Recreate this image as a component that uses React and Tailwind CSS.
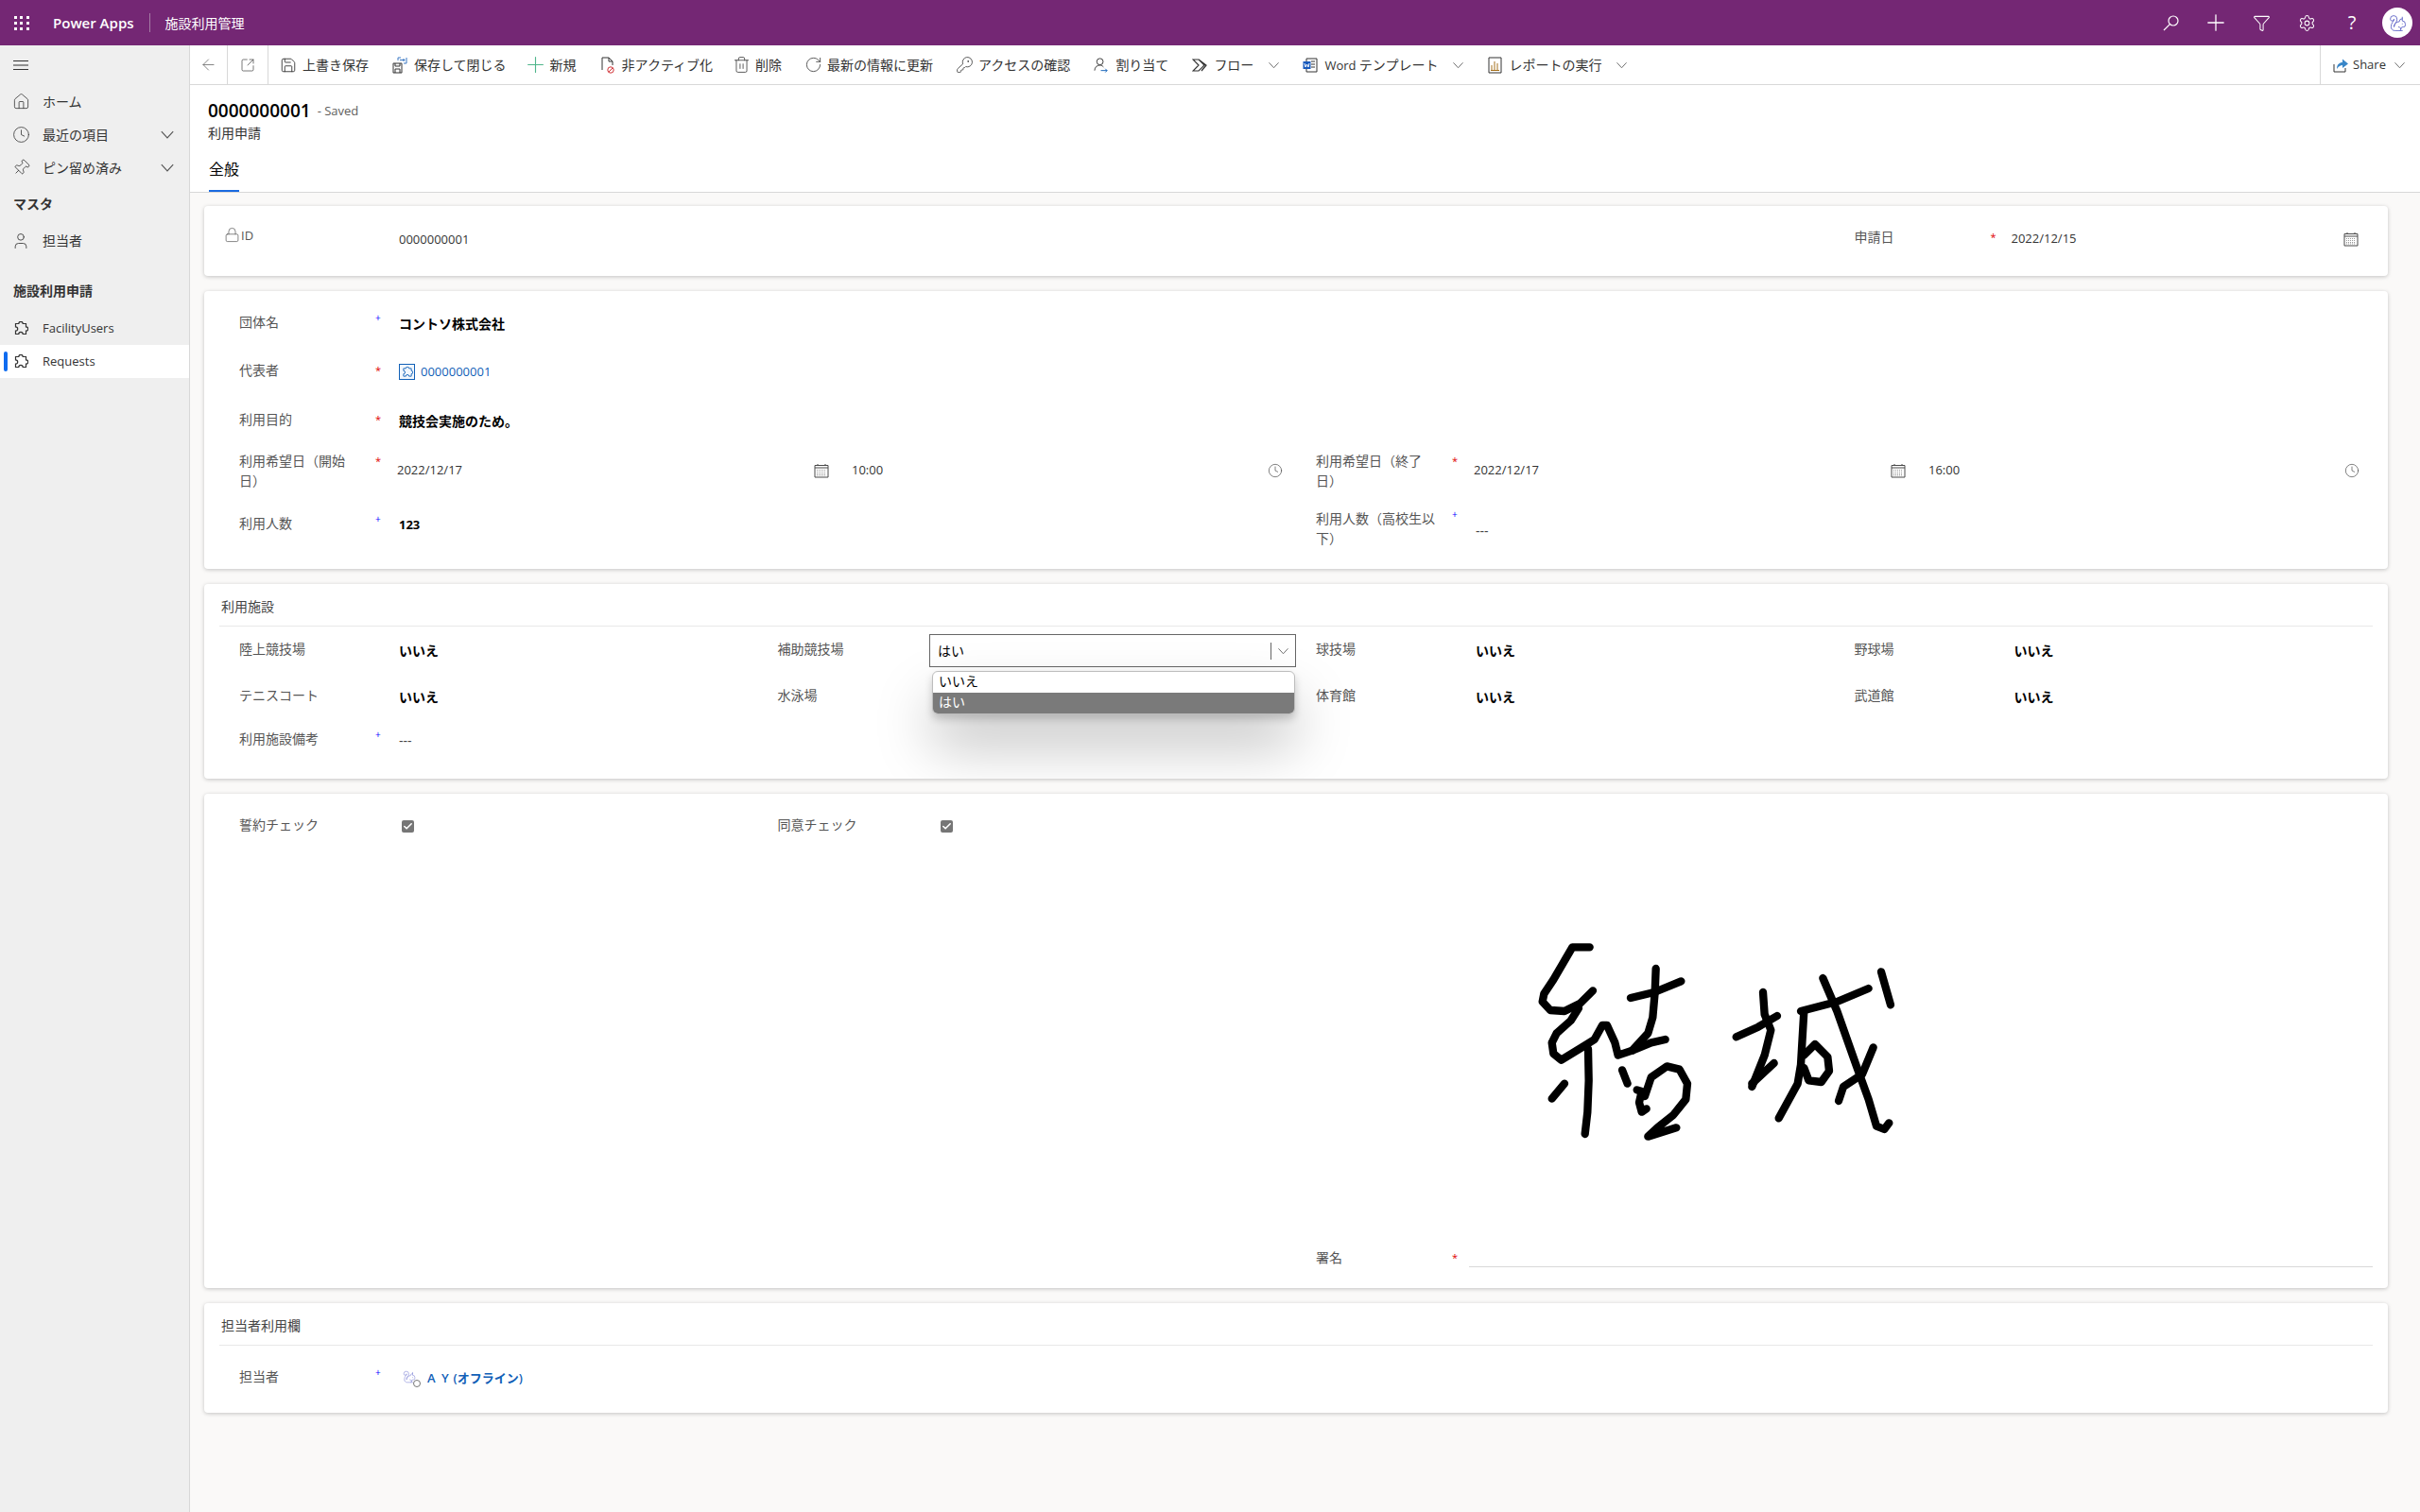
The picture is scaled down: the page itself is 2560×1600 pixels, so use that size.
import React from "react";
import {
  ArrowLeft, Check, Clock, Filter, Home, KeyRound, Lock,
  Pin, Plus, RotateCw, Save, Settings, Squirrel, SquareArrowOutUpRight, Trash2, User,
} from "lucide-react";

const Chevron = ({ className = "" }) => (
  <svg width="12" height="8" viewBox="0 0 12 8" className={className} fill="none" stroke="currentColor" strokeWidth="1">
    <path d="M0.5 1 L6 7 L11.5 1" />
  </svg>
);

const PuzzleIcon = ({ size = 16, color = "#333" }) => (
  <svg width={size} height={size} viewBox="0 0 16 16" fill="none" stroke={color} strokeWidth="1.2">
    <path d="M2.5 2.5 H5.8 A2.2 2.2 0 0 1 10.2 2.5 H13.5 V5.8 A2.2 2.2 0 0 1 13.5 10.2 V13.5 H10.2 A2.2 2.2 0 0 0 5.8 13.5 H2.5 V10.2 A2.2 2.2 0 0 0 2.5 5.8 Z" />
  </svg>
);

const SearchIcon = () => (
  <svg width="17" height="17" viewBox="0 0 17 17" fill="none" stroke="#fff" strokeWidth="1.2">
    <circle cx="11" cy="6" r="5" />
    <path d="M7.4 9.6 L1 16" />
  </svg>
);

const SaveCloseIcon = () => (
  <svg width="16" height="18" viewBox="0 0 16 18" fill="none" stroke="#333" strokeWidth="1">
    <path d="M1 7 H10 V17 H1 Z M3 7 V10 H8 V7 M3 17 V13 H8 V17" />
    <path d="M6 4 V1 H9 M15 1 V7 H12 M8 3.5 H13 M11.5 2 L13 3.5 L11.5 5" stroke="#3b79c4" />
  </svg>
);

const DeactivateIcon = () => (
  <svg width="16" height="18" viewBox="0 0 16 18" fill="none" stroke="#333" strokeWidth="1">
    <path d="M2 14 V1 H9 L13 5 V9 M9 1 V5 H13" />
    <circle cx="11" cy="14" r="3.2" stroke="#d13438" />
    <path d="M9 16 L13 12" stroke="#d13438" />
  </svg>
);

const AssignIcon = () => (
  <svg width="17" height="18" viewBox="0 0 17 18" fill="none" stroke="#333" strokeWidth="1">
    <circle cx="7" cy="5" r="3.6" />
    <path d="M1 15 C1 11 4 9 7 9 C9 9 10 10 11 11" />
    <path d="M8 15 H15 M13 13 L15 15 L13 17" stroke="#1160b7" />
  </svg>
);

const FlowIcon = () => (
  <svg width="16" height="14" viewBox="0 0 16 14" fill="none" stroke="#333" strokeWidth="1.2">
    <path d="M1 1 H7 L13 7 L7 13 H1 L7 7 Z M7 1 L15 7 L10 13" />
  </svg>
);

const WordIcon = () => (
  <svg width="16" height="16" viewBox="0 0 16 16" fill="none" stroke="#333" strokeWidth="1">
    <path d="M4 1 H15 V15 H4 Z M9 4 H13 M9 7 H13 M9 10 H13" />
    <rect x="0.5" y="4" width="8" height="8" fill="#185abd" stroke="none" />
    <path d="M2 6 L3 10 L4.5 7 L6 10 L7 6" stroke="#fff" />
  </svg>
);

const ReportIcon = () => (
  <svg width="15" height="18" viewBox="0 0 15 18" fill="none" stroke="#333" strokeWidth="1">
    <path d="M1 1 H14 V17 H1 Z" />
    <path d="M4 14 V9 M7 14 V5 M10 14 V7 M3 14.5 H12" stroke="#a5701c" />
  </svg>
);

const ShareIcon = () => (
  <svg width="16" height="16" viewBox="0 0 16 16" fill="none">
    <path d="M1 7 V15 H13 V11" stroke="#333" strokeWidth="1" />
    <path d="M4 12 C4 7 7 5 10 5 V1.5 L16 6.5 L10 11 V8 C8 8 6 9 4 12 Z" fill="#3a87c8" />
  </svg>
);

const CalendarIcon = () => (
  <svg width="16" height="16" viewBox="0 0 16 16" fill="none" stroke="#4a4a4a" strokeWidth="1">
    <path d="M1 2.5 H15 V15 H1 Z" />
    <path d="M1 5 H15 M4 1 V3 M12 1 V3" />
    <path d="M3 7.5 H13 M3 9.5 H13 M3 11.5 H13 M3 13 H13" stroke="#9a9a9a" strokeDasharray="1 1" />
  </svg>
);

const MenuIcon = () => (
  <svg width="16" height="10" viewBox="0 0 16 10" stroke="#333" strokeWidth="1">
    <path d="M0 0.5 H16 M0 5 H16 M0 9.5 H16" />
  </svg>
);

// signature strokes traced at 3x of the 460x260 area
const strokes = [
  "M305,97 L250,97 L225,140 L190,200 L160,245 L155,270 L180,297 L225,300 L275,275 L315,235",
  "M270,290 L245,330 L200,370 L185,400 L190,435 L215,455 L280,415 L320,390 L345,345 L360,345 L385,400 L395,440 L440,425 L500,400 L545,390",
  "M300,420 L302,520 L298,620 L290,690",
  "M225,530 L185,578",
  "M515,165 L512,240 L505,320 L490,370 L440,425",
  "M435,258 L510,240 L595,205",
  "M408,487 L425,530",
  "M455,550 L470,555 L462,590 L470,620 L485,610",
  "M480,570 L500,510 L550,475 L590,485 L615,530 L610,580 L570,630 L520,670 L490,698 L580,670",
  "M855,240 L860,310 L880,360 L860,440 L820,540",
  "M770,382 L840,350 L900,315",
  "M820,530 L890,465",
  "M975,300 L1090,270 L1190,228",
  "M985,300 L975,470 L965,530 L905,640",
  "M1045,195 L1090,300 L1150,470 L1190,580 L1215,665 L1240,675 L1255,655",
  "M985,440 L1020,405 L1060,445 L1065,490 L1040,525 L1000,520 L985,480",
  "M1205,415 L1170,500 L1110,540 L1095,585",
  "M1230,175 L1260,280",
];

const Signature = () => (
  <svg width="460" height="260" viewBox="0 0 1380 780" fill="none" stroke="#000" strokeWidth="25" strokeLinecap="round" strokeLinejoin="round">
    {strokes.map((d) => <path key={d} d={d} />)}
  </svg>
);

const tools = [
  { icon: <Save size={18} strokeWidth={1.2} className="shrink-0" />, text: "上書き保存" },
  { icon: <SaveCloseIcon />, text: "保存して閉じる" },
  { icon: <Plus size={27} strokeWidth={1} color="#4fb58b" className="shrink-0" />, text: "新規", cls: "-ml-[2px]" },
  { icon: <DeactivateIcon />, text: "非アクティブ化" },
  { icon: <Trash2 size={19} strokeWidth={1} className="shrink-0" />, text: "削除", cls: "-ml-[3px]" },
  { icon: <RotateCw size={19} strokeWidth={1} className="shrink-0" />, text: "最新の情報に更新" },
  { icon: <KeyRound size={19} strokeWidth={1} className="shrink-0" />, text: "アクセスの確認" },
  { icon: <AssignIcon />, text: "割り当て" },
  { icon: <FlowIcon />, text: "フロー", more: true },
  { icon: <WordIcon />, text: <><span className="text-[13px]">Word </span>テンプレート</>, more: true },
  { icon: <ReportIcon />, text: "レポートの実行", more: true },
];

const Star = ({ type }) => {
  if (type === "red") return <span className="-ml-[3px] mt-[4px] block text-[11px] leading-[14px] text-[#e00000]">*</span>;
  if (type === "blue") return <span className="-ml-[3px] block text-[10px] leading-[12px] text-[#0000ff]">+</span>;
  return null;
};

const Field = ({ label, star, children, className = "" }) => (
  <div className={`flex ${className}`}>
    <div className="ml-[21px] w-[147px] shrink-0 pr-[20px] text-[14px] leading-[21px] text-[#555]">{label}</div>
    <div className="w-[22px] shrink-0"><Star type={star} /></div>
    <div className="mt-[2px] flex min-w-0 flex-1 items-start text-[14px] leading-[21px]">{children}</div>
  </div>
);

const Yes = ({ children = "いいえ" }) => <span className="font-bold text-black">{children}</span>;

const Num = ({ children }) => <span className="text-[13px] text-[#333]">{children}</span>;

const DateTime = ({ date, time }) => (
  <div className="-ml-[2px] mt-[8px] flex items-center">
    <div className="flex w-[457px] items-center justify-between"><Num>{date}</Num><CalendarIcon /></div>
    <div className="ml-[24px] flex w-[456px] items-center justify-between">
      <Num>{time}</Num><Clock size={16} strokeWidth={1} color="#444" />
    </div>
  </div>
);

const CheckBox = () => (
  <span className="ml-[3px] mt-[4px] flex h-[13px] w-[13px] items-center justify-center rounded-[2px] bg-[#767676]">
    <Check size={11} strokeWidth={3.5} color="#fff" />
  </span>
);

const Card = ({ className = "", children }) => (
  <section className={`rounded bg-white px-4 shadow-[0_1px_4px_rgba(0,0,0,0.22)] ${className}`}>{children}</section>
);

const SectionTitle = ({ children }) => (
  <div className="mb-[10px] pl-[2px] text-[14px] leading-[21px] text-[#444]">{children}</div>
);

const NavItem = ({ icon, label, more, active }) => (
  <div className={`relative flex h-[35px] items-center text-[#333] ${active ? "bg-white" : ""}`}>
    {active && <span className="absolute left-[4px] top-[7px] h-[21px] w-[4px] rounded-sm bg-[#0f6cf0]" />}
    <span className="flex w-[45px] shrink-0 justify-center pr-[1px]">{icon}</span>
    <span className="-mt-[1px] flex-1">{label}</span>
    {more && <Chevron className="mr-[15px] h-[9px] w-[16px] text-[#555]" />}
  </div>
);

export default function App() {
  return (
    <div className="flex h-[1600px] w-full flex-col overflow-hidden bg-[#faf9f8] font-['Open_Sans','Noto_Sans_CJK_JP',sans-serif] text-[14px] text-[#333]">
      {/* Top bar */}
      <header className="flex h-12 shrink-0 items-center bg-[#742774] text-white">
        <div className="ml-[15px] grid w-[16px] grid-cols-3 gap-[3px]">
          {Array.from({ length: 9 }).map((_, i) => <span key={i} className="h-[3px] w-[3px] bg-white" />)}
        </div>
        <span className="ml-[25px] text-[15px] font-semibold">Power Apps</span>
        <span className="ml-[16px] h-5 w-px bg-[#a57ba5]" />
        <span className="ml-[16px]">施設利用管理</span>
        <div className="ml-auto flex items-center">
          <span className="flex w-12 justify-center"><SearchIcon /></span>
          <span className="flex w-12 justify-center"><Plus size={28} strokeWidth={1.1} /></span>
          <span className="flex w-12 justify-center"><Filter size={19} strokeWidth={1.3} /></span>
          <span className="flex w-12 justify-center"><Settings size={19} strokeWidth={1.3} /></span>
          <span className="flex w-12 justify-center"><span className="text-[20px] leading-none">?</span></span>
          <span className="flex w-12 justify-center">
            <span className="flex h-8 w-8 items-center justify-center rounded-full bg-white">
              <Squirrel size={19} strokeWidth={1.1} color="#5a5fc4" />
            </span>
          </span>
        </div>
      </header>

      <div className="flex min-h-0 flex-1">
        {/* Sidebar */}
        <aside className="w-[201px] shrink-0 border-r border-[#d8d8d8] bg-[#efefef]">
          <div className="flex h-[42px] items-center pl-[14px]"><MenuIcon /></div>
          <NavItem icon={<Home size={19} strokeWidth={1} />} label="ホーム" />
          <NavItem icon={<Clock size={19} strokeWidth={1} />} label="最近の項目" more />
          <NavItem icon={<Pin size={19} strokeWidth={1} className="rotate-45" />} label="ピン留め済み" more />
          <div className="h-[42px] pl-[14px] pt-[10px] font-bold leading-[21px]">マスタ</div>
          <NavItem icon={<User size={20} strokeWidth={1} />} label="担当者" />
          <div className="h-[58px] pl-[14px] pt-[25px] font-bold leading-[21px]">施設利用申請</div>
          <NavItem icon={<PuzzleIcon />} label={<span className="text-[13px]">FacilityUsers</span>} />
          <NavItem icon={<PuzzleIcon />} label={<span className="text-[13px]">Requests</span>} active />
        </aside>

        <main className="flex min-w-0 flex-1 flex-col">
          {/* Command bar */}
          <div className="flex h-[42px] shrink-0 items-center border-b border-[#d8d8d8] bg-white">
            <span className="flex h-full w-[40px] items-center justify-center border-r border-[#d8d8d8]"><ArrowLeft size={19} strokeWidth={1} color="#666" /></span>
            <span className="flex h-full w-[43px] items-center justify-center border-r border-[#d8d8d8]"><SquareArrowOutUpRight size={16} strokeWidth={1} /></span>
            <div className="ml-[13px] flex items-center gap-[25px]">
              {tools.map((t, i) => (
                <div key={i} className={`flex items-center whitespace-nowrap ${t.cls || ""}`}>
                  <span className="mr-[7px] flex w-[16px] justify-center">{t.icon}</span>
                  <span>{t.text}</span>
                  {t.more && <Chevron className="ml-[16px] w-[11px] text-[#666]" />}
                </div>
              ))}
            </div>
            <div className="ml-auto flex h-full w-[106px] items-center border-l border-[#d8d8d8] pl-[13px]">
              <ShareIcon />
              <span className="ml-[5px] text-[13px]">Share</span>
              <Chevron className="ml-[9px] w-[11px] text-[#666]" />
            </div>
          </div>

          {/* Record header */}
          <div className="h-[114px] shrink-0 border-b border-[#d8d8d8] bg-white pl-[19px] pt-[15px]">
            <div className="flex h-[24px] items-center">
              <span className="text-[19px] font-semibold text-black">0000000001</span>
              <span className="ml-[7px] mt-[2px] text-[13px] text-[#605e5c]">- Saved</span>
            </div>
            <div className="mt-[1px] leading-[21px]">利用申請</div>
            <div className="ml-[1px] mt-[16px] w-[32px] border-b-2 border-[#1a6ae0] pb-[10px] text-[16px] leading-[24px] text-black">全般</div>
          </div>

          {/* Form */}
          <div className="flex flex-col gap-4 pl-[15px] pr-[34px] pt-[14px]">
            <Card className="h-[74px] pt-[22px]">
              <div className="grid grid-cols-4">
                <div className="flex">
                  <div className="-mt-[1px] ml-[5px] flex h-[21px] w-[185px] items-center text-[13px] leading-[21px] text-[#555]">
                    <Lock size={17} strokeWidth={1} className="mb-[3px] mr-[1px]" />ID
                  </div>
                  <div className="mt-[2px] leading-[21px]"><Num>0000000001</Num></div>
                </div>
                <div />
                <div />
                <Field label="申請日" star="red">
                  <div className="-ml-[3px] flex flex-1 items-center justify-between pr-[15px]"><Num>2022/12/15</Num><CalendarIcon /></div>
                </Field>
              </div>
            </Card>

            <Card className="h-[294px] pt-[22px]">
              <Field label="団体名" star="blue" className="h-[51px]"><Yes>コントソ株式会社</Yes></Field>
              <Field label="代表者" star="red" className="h-[52px]">
                <span className="flex items-center text-[#1160b7]">
                  <span className="mr-[6px] flex h-[17px] w-[17px] items-center justify-center border border-[#1160b7] bg-[#f2f7fc]"><PuzzleIcon size={12} color="#1160b7" /></span>
                  <span className="text-[13px]">0000000001</span>
                </span>
              </Field>
              <Field label="利用目的" star="red" className="h-[44px]"><Yes>競技会実施のため。</Yes></Field>
              <div className="grid h-[66px] grid-cols-2">
                <Field label="利用希望日（開始日）" star="red"><DateTime date="2022/12/17" time="10:00" /></Field>
                <Field label="利用希望日（終了日）" star="red"><DateTime date="2022/12/17" time="16:00" /></Field>
              </div>
              <div className="grid grid-cols-2">
                <Field label="利用人数" star="blue"><span className="text-[13px] font-bold text-black">123</span></Field>
                <Field label="利用人数（高校生以下）" star="blue" className="-mt-[5px]"><span className="mt-[11px] text-[#444]">---</span></Field>
              </div>
            </Card>

            <Card className="relative h-[206px] overflow-hidden pt-[13px]">
              <SectionTitle>利用施設</SectionTitle>
              <div className="h-px bg-[#e8e8e8]" />
              <div className="mt-[13px] grid grid-cols-4">
                <Field label="陸上競技場" className="h-[49px]"><Yes /></Field>
                <Field label="補助競技場" className="h-[49px]" />
                <Field label="球技場" className="h-[49px]"><Yes /></Field>
                <Field label="野球場" className="h-[49px]"><Yes /></Field>
                <Field label="テニスコート" className="h-[46px]"><Yes /></Field>
                <Field label="水泳場" className="h-[46px]" />
                <Field label="体育館" className="h-[46px]"><Yes /></Field>
                <Field label="武道館" className="h-[46px]"><Yes /></Field>
                <Field label="利用施設備考" star="blue"><span className="text-[#444]">---</span></Field>
              </div>
              {/* open select */}
              <div className="absolute left-[767px] top-[53px] flex h-[35px] w-[388px] items-center border border-[#666] bg-white pl-[8px]">
                <span className="flex-1 text-black">はい</span>
                <span className="h-[18px] w-px bg-[#666]" />
                <Chevron className="mx-[7px] w-[11px] text-[#666]" />
              </div>
              <div className="absolute left-[770px] top-[92px] w-[384px] overflow-hidden rounded-[6px] border border-[#bdbdbd] bg-white text-[14px] shadow-[0_5px_8px_rgba(0,0,0,0.18),0_32px_60px_rgba(0,0,0,0.26)]">
                <div className="h-[22px] pl-[6px] leading-[20px] text-black">いいえ</div>
                <div className="h-[22px] bg-[#7a7a7a] pl-[6px] leading-[20px] text-white">はい</div>
              </div>
            </Card>

            <Card className="h-[523px] pt-[22px]">
              <div className="grid h-[108px] grid-cols-4">
                <Field label="誓約チェック"><CheckBox /></Field>
                <Field label="同意チェック"><CheckBox /></Field>
              </div>
              <div className="h-[350px] pl-[1348px]"><Signature /></div>
              <div className="grid grid-cols-2">
                <div />
                <Field label="署名" star="red">
                  <div className="-ml-[7px] h-[19px] flex-1 border-b border-[#d8d8d8]" />
                </Field>
              </div>
            </Card>

            <Card className="h-[116px] pt-[13px]">
              <SectionTitle>担当者利用欄</SectionTitle>
              <div className="h-px bg-[#e8e8e8]" />
              <div className="mt-[22px]">
                <Field label="担当者" star="blue">
                  <span className="flex items-center text-[#1160b7]">
                    <span className="relative ml-[4px] mr-[7px] h-[18px] w-[19px]">
                      <Squirrel size={14} strokeWidth={1} color="#7f85d6" />
                      <span className="absolute bottom-0 right-0 h-[8px] w-[8px] rounded-full border border-[#777] bg-white" />
                    </span>
                    <span className="whitespace-pre text-[13px] font-semibold"><span className="tracking-[1.5px]">A Y</span> (オフライン)</span>
                  </span>
                </Field>
              </div>
            </Card>
          </div>
        </main>
      </div>
    </div>
  );
}
